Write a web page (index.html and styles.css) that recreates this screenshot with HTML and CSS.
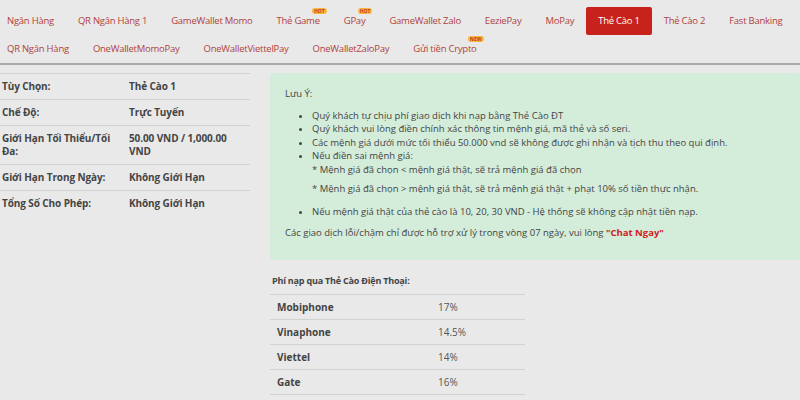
FILE: index.html
```html
<!DOCTYPE html>
<html>
<head>
    <meta charset="utf-8" />
    <title>Thẻ Cào 1</title>
    <link rel="stylesheet" href="styles.css">
</head>
<body>
    <div id="tabs">
        <div class="tab_row">
            <a class="tab">Ngân Hàng</a>
            <a class="tab">QR Ngân Hàng 1</a>
            <a class="tab">GameWallet Momo</a>
            <a class="tab">Thẻ Game<span class="badge">HOT</span></a>
            <a class="tab">GPay<span class="badge">HOT</span></a>
            <a class="tab">GameWallet Zalo</a>
            <a class="tab">EeziePay</a>
            <a class="tab">MoPay</a>
            <a class="tab active">Thẻ Cào 1</a>
            <a class="tab">Thẻ Cào 2</a>
            <a class="tab">Fast Banking</a>
        </div>
        <div class="tab_row">
            <a class="tab">QR Ngân Hàng</a>
            <a class="tab">OneWalletMomoPay</a>
            <a class="tab">OneWalletViettelPay</a>
            <a class="tab">OneWalletZaloPay</a>
            <a class="tab">Gửi tiền Crypto<span class="badge">NEW</span></a>
        </div>
    </div>
    <div id="content">
        <div id="info">
            <table class="info_table">
                <tr><td class="label">Tùy Chọn:</td><td>Thẻ Cào 1</td></tr>
                <tr><td class="label">Chế Độ:</td><td>Trực Tuyến</td></tr>
                <tr><td class="label">Giới Hạn Tối Thiểu/Tối Đa:</td><td>50.00 VND / 1,000.00 VND</td></tr>
                <tr><td class="label">Giới Hạn Trong Ngày:</td><td>Không Giới Hạn</td></tr>
                <tr><td class="label">Tổng Số Cho Phép:</td><td>Không Giới Hạn</td></tr>
            </table>
        </div>
        <div id="main">
            <div class="note">
                <p class="note_title">Lưu Ý:</p>
                <ul>
                    <li>Quý khách tự chịu phí giao dịch khi nạp bằng Thẻ Cào ĐT</li>
                    <li>Quý khách vui lòng điền chính xác thông tin mệnh giá, mã thẻ và số seri.</li>
                    <li>Các mệnh giá dưới mức tối thiểu 50.000 vnd sẽ không được ghi nhận và tịch thu theo qui định.</li>
                    <li>Nếu điền sai mệnh giá:
                        <p class="sub">* Mệnh giá đã chọn &lt; mệnh giá thật, sẽ trả mệnh giá đã chọn</p>
                        <p class="sub">* Mệnh giá đã chọn &gt; mệnh giá thật, sẽ trả mệnh giá thật + phạt 10% số tiền thực nhận.</p>
                    </li>
                    <li class="last">Nếu mệnh giá thật của thẻ cào là 10, 20, 30 VND - Hệ thống sẽ không cập nhật tiền nạp.</li>
                </ul>
                <p>Các giao dịch lỗi/chậm chỉ được hỗ trợ xử lý trong vòng 07 ngày, vui lòng <span class="chat">"Chat Ngay"</span></p>
            </div>
            <div class="fee">
                <p class="fee_title">Phí nạp qua Thẻ Cào Điện Thoại:</p>
                <table class="fee_table">
                    <tr><td class="label">Mobiphone</td><td>17%</td></tr>
                    <tr><td class="label">Vinaphone</td><td>14.5%</td></tr>
                    <tr><td class="label">Viettel</td><td>14%</td></tr>
                    <tr><td class="label">Gate</td><td>16%</td></tr>
                </table>
            </div>
        </div>
    </div>
</body>
</html>
```

FILE: styles.css
```css
body {
    margin: 0;
    background-color: #e9e9e9;
    font-family: "Open Sans", "Noto Sans", sans-serif;
    color: #333333;
}
p {
    margin: 0;
}
#tabs {
    padding: 7px 0 0 0;
    margin-left: -5px;
    border-bottom: 2px solid #a9a9a9;
}
.tab_row {
    display: flex;
}
.tab {
    position: relative;
    display: block;
    height: 28px;
    line-height: 28px;
    padding: 0 12px;
    font-size: 9.5px;
    letter-spacing: -0.25px;
    color: #b0433e;
    white-space: nowrap;
    cursor: pointer;
}
.tab.active {
    background-color: #c8221c;
    color: #ffffff;
    border-radius: 2px;
}
.badge {
    position: absolute;
    top: 1px;
    right: 5px;
    height: 6px;
    line-height: 6px;
    padding: 0 2px;
    border-radius: 3px;
    background-color: #f5b83d;
    color: #c0392b;
    font-size: 5px;
    font-weight: bold;
    letter-spacing: 0;
}
#content {
    display: flex;
    padding-top: 8px;
}
#info {
    width: 250px;
    flex-shrink: 0;
}
.info_table {
    width: 100%;
    border-collapse: collapse;
    font-size: 10px;
    letter-spacing: -0.1px;
    font-weight: bold;
    color: #444444;
}
.info_table td {
    padding: 6px 0 6px 2px;
    line-height: 13px;
    vertical-align: top;
    border-top: 1px solid #d2d2d2;
}
.info_table td.label {
    width: 125px;
}
#main {
    flex: 1;
    margin-left: 20px;
}
.note {
    background-color: #d4ecda;
    border-radius: 3px;
    padding: 14px 15px 20px 15px;
    font-size: 9.5px;
    color: #444444;
    line-height: 13.5px;
}
.note_title {
    margin-bottom: 8px;
}
.note ul {
    margin: 0 0 8px 0;
    padding-left: 27px;
}
.note .sub {
    margin-bottom: 6px;
}
.note li.last {
    margin-top: 9px;
}
.chat {
    color: #d0201b;
    font-weight: bold;
}
.fee {
    margin-top: 14px;
}
.fee_title {
    font-size: 9px;
    letter-spacing: -0.2px;
    font-weight: bold;
    color: #444444;
    padding-left: 2px;
    margin-bottom: 7px;
}
.fee_table {
    width: 255px;
    border-collapse: collapse;
    font-size: 10px;
    color: #555555;
}
.fee_table td {
    padding: 6px 0 5px 0;
    line-height: 13px;
    border-top: 1px solid #d2d2d2;
    border-bottom: 1px solid #d2d2d2;
}
.fee_table td.label {
    width: 161px;
    padding-left: 7px;
    font-weight: bold;
    color: #444444;
}
```
